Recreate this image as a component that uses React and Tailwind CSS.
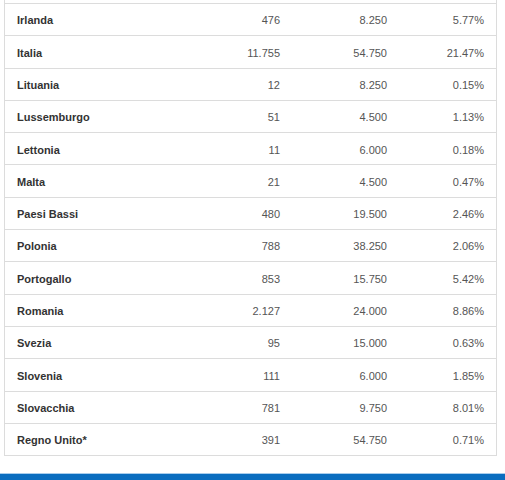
const rows = [
  ['Irlanda', '476', '8.250', '5.77%'],
  ['Italia', '11.755', '54.750', '21.47%'],
  ['Lituania', '12', '8.250', '0.15%'],
  ['Lussemburgo', '51', '4.500', '1.13%'],
  ['Lettonia', '11', '6.000', '0.18%'],
  ['Malta', '21', '4.500', '0.47%'],
  ['Paesi Bassi', '480', '19.500', '2.46%'],
  ['Polonia', '788', '38.250', '2.06%'],
  ['Portogallo', '853', '15.750', '5.42%'],
  ['Romania', '2.127', '24.000', '8.86%'],
  ['Svezia', '95', '15.000', '0.63%'],
  ['Slovenia', '111', '6.000', '1.85%'],
  ['Slovacchia', '781', '9.750', '8.01%'],
  ['Regno Unito*', '391', '54.750', '0.71%'],
]

export default function App() {
  return (
    <div className="w-[505px] h-[480px] overflow-hidden bg-white font-['Liberation_Sans',Arial,sans-serif] text-[11px]">
      {/* Tabella (continua dall'alto) */}
      <div className="ml-[4px] w-[493px] border-x border-b border-[#dcdcdc]">
        <div className="h-[3px]" />
        {rows.map(([nome, a, b, c]) => (
          <div
            key={nome}
            className="grid grid-cols-[179px_108px_107px_97px] items-center pt-[2px] h-[32.3px] border-t border-[#dcdcdc]"
          >
            <div className="pl-[12px] font-bold text-[#333]">{nome}</div>
            <div className="pr-[12px] text-right text-[#555]">{a}</div>
            <div className="pr-[12px] text-right text-[#555]">{b}</div>
            <div className="pr-[12px] text-right text-[#555]">{c}</div>
          </div>
        ))}
      </div>

      {/* Footer */}
      <div className="mt-[17px] h-px bg-[#a9cdec]" />
      <div className="h-[10px] bg-[#0b6dbf]" />
    </div>
  )
}
